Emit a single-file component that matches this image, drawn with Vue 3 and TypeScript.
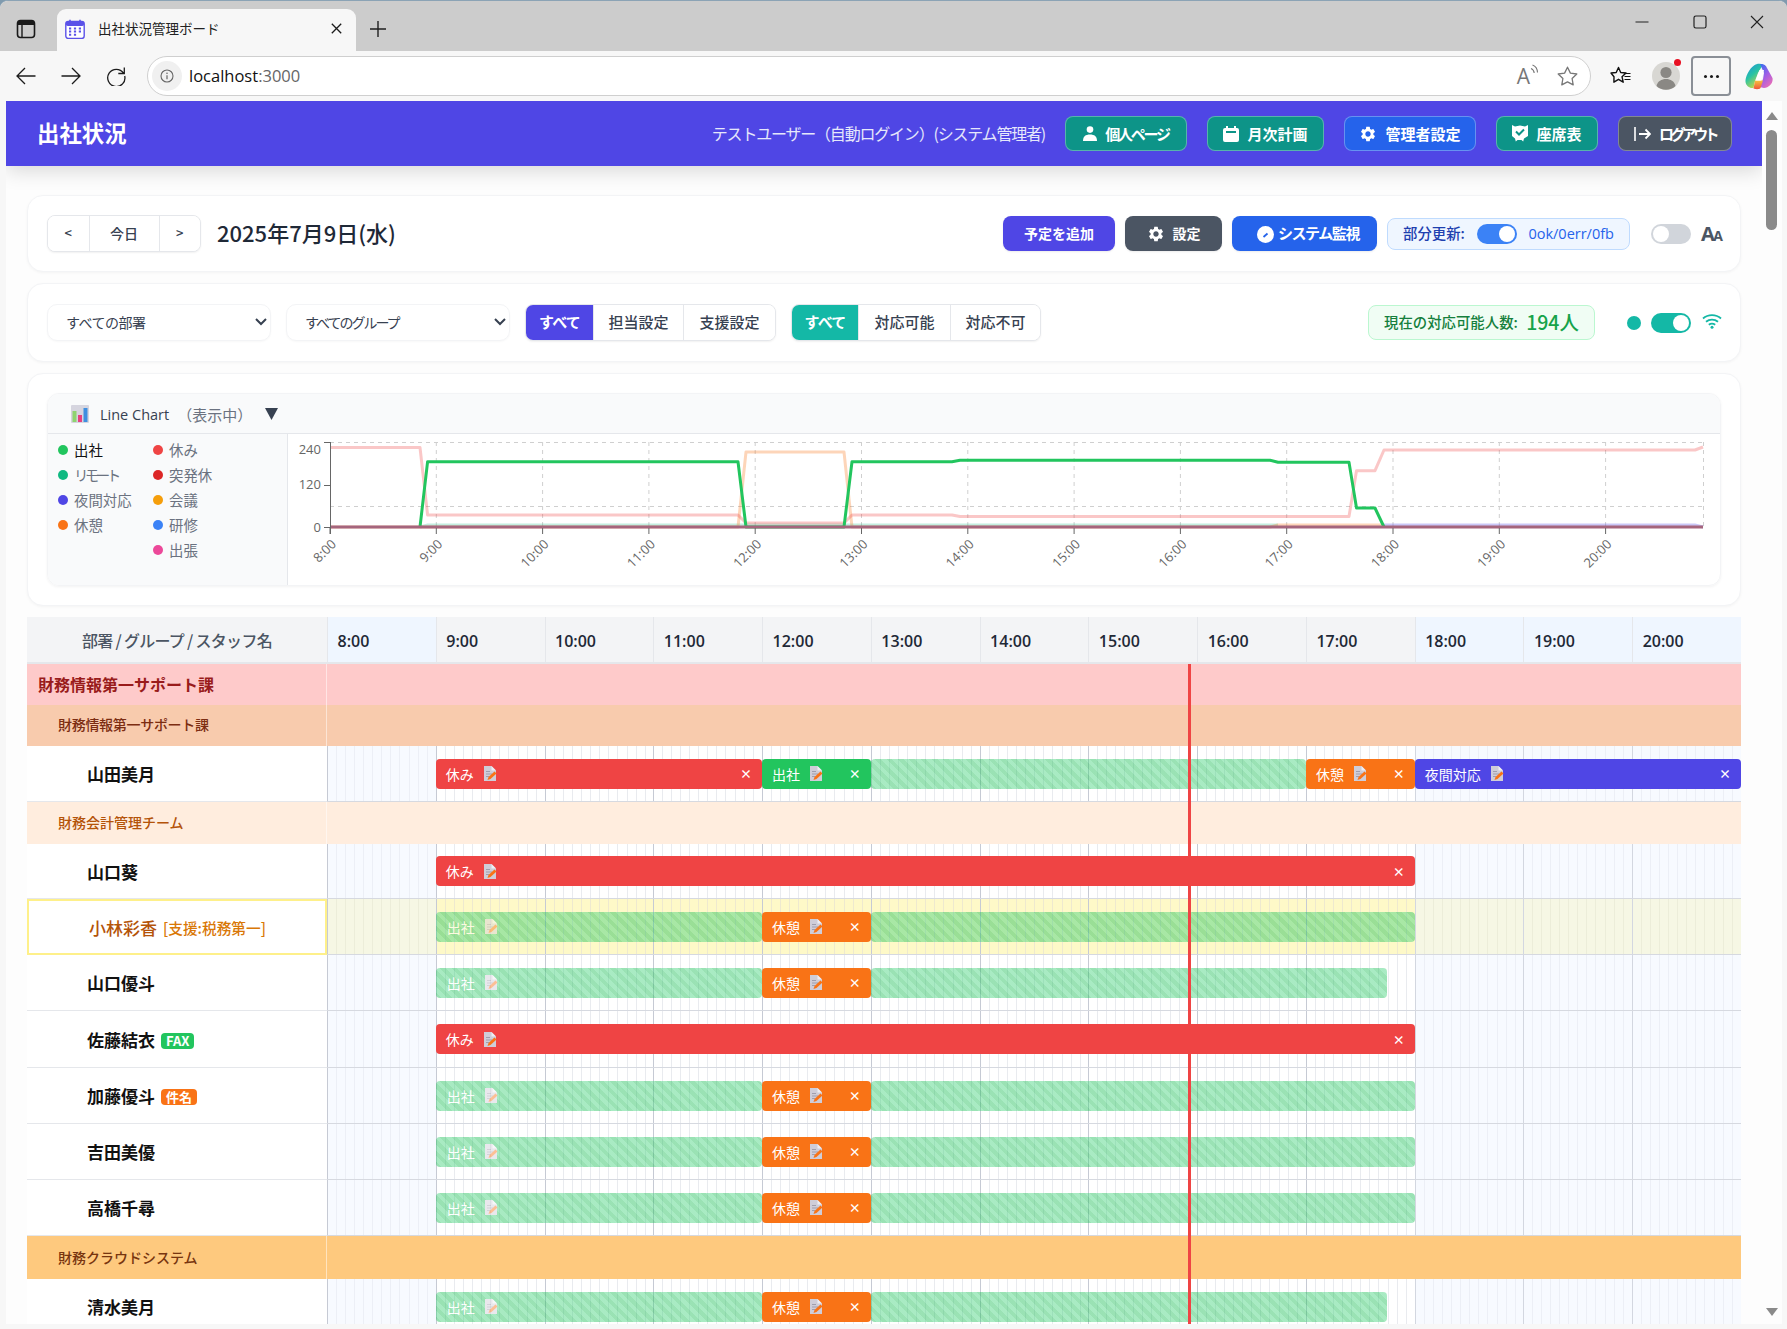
<script setup lang="ts">
type Bar = { label: string; from: number; to: number; tone: string };
type Row = {
  kind: "dept" | "group" | "staff";
  name: string;
  h: number;
  tone?: string;
  support?: string;
  badge?: string;
  badgeTone?: string;
  highlight?: boolean;
  bars?: Bar[];
};

const hours = Array.from({ length: 13 }, (_, i) => i + 8);
const isOff = (h: number) => h < 9 || h >= 18;

const gear =
  "M19.14 12.94c.04-.3.06-.61.06-.94 0-.32-.02-.64-.07-.94l2.03-1.58a.49.49 0 0 0 .12-.61l-1.92-3.32a.488.488 0 0 0-.59-.22l-2.39.96c-.5-.38-1.03-.7-1.62-.94l-.36-2.54a.484.484 0 0 0-.48-.41h-3.84c-.24 0-.43.17-.47.41l-.36 2.54c-.59.24-1.13.57-1.62.94l-2.39-.96c-.22-.08-.47 0-.59.22L2.74 8.87c-.12.21-.08.47.12.61l2.03 1.58c-.05.3-.09.63-.09.94s.02.64.07.94l-2.03 1.58a.49.49 0 0 0-.12.61l1.92 3.32c.12.22.37.29.59.22l2.39-.96c.5.38 1.03.7 1.62.94l.36 2.54c.05.24.24.41.48.41h3.84c.24 0 .44-.17.47-.41l.36-2.54c.59-.24 1.13-.56 1.62-.94l2.39.96c.22.08.47 0 .59-.22l1.92-3.32c.12-.22.07-.47-.12-.61l-2.01-1.58zM12 15.6c-1.98 0-3.6-1.62-3.6-3.6s1.62-3.6 3.6-3.6 3.6 1.62 3.6 3.6-1.62 3.6-3.6 3.6z";

const legendA = [
  { t: "出社", c: "#22c55e", cls: "on" },
  { t: "リモート", c: "#10b981", cls: "kana" },
  { t: "夜間対応", c: "#4f46e5", cls: "" },
  { t: "休憩", c: "#f97316", cls: "" },
];
const legendB = [
  { t: "休み", c: "#ef4444" },
  { t: "突発休", c: "#dc2626" },
  { t: "会議", c: "#f59e0b" },
  { t: "研修", c: "#3b82f6" },
  { t: "出張", c: "#ec4899" },
];

const chartHours = hours.map((h) => ({ h, x: 330 + (h - 8) * 106.3 }));
const pink =
  "330,447.5 420,447.5 427.6,515 738,515 746,523 844,523 852,515 952,515 960,516.5 1349,516.5 1356.5,470.7 1375,470.7 1384,450 1695,450 1703,447";
const green =
  "420,527 427.6,461.7 738,461.7 746,527 844,527 852,461.7 952,461.7 960,460.3 1270,460.3 1278,462.3 1349,462.3 1356.5,508 1375,508 1384,527";
const orange = "330,527 738,527 746,452 844,452 852,527 1270,527 1278,525 1384,525";
const teal = "420,527 427.6,525 1278,525";
const violet = "1384,525 1695,525 1703,527";

const full = (end: number): Bar[] => [
  { label: "出社", from: 9, to: 12, tone: "stripe" },
  { label: "休憩", from: 12, to: 13, tone: "orange" },
  { label: "", from: 13, to: end, tone: "stripe" },
];

const rows: Row[] = [
  { kind: "dept", name: "財務情報第一サポート課", h: 41 },
  { kind: "group", name: "財務情報第一サポート課", h: 41, tone: "g1" },
  {
    kind: "staff",
    name: "山田美月",
    h: 56,
    bars: [
      { label: "休み", from: 9, to: 12, tone: "red" },
      { label: "出社", from: 12, to: 13, tone: "green" },
      { label: "", from: 13, to: 17, tone: "stripe" },
      { label: "休憩", from: 17, to: 18, tone: "orange" },
      { label: "夜間対応", from: 18, to: 21, tone: "indigo" },
    ],
  },
  { kind: "group", name: "財務会計管理チーム", h: 42, tone: "g2" },
  { kind: "staff", name: "山口葵", h: 55, bars: [{ label: "休み", from: 9, to: 18, tone: "red" }] },
  { kind: "staff", name: "小林彩香", h: 56, support: "[支援:税務第一]", highlight: true, bars: full(18) },
  { kind: "staff", name: "山口優斗", h: 56, bars: full(17.75) },
  {
    kind: "staff",
    name: "佐藤結衣",
    h: 57,
    badge: "FAX",
    badgeTone: "fax",
    bars: [{ label: "休み", from: 9, to: 18, tone: "red" }],
  },
  { kind: "staff", name: "加藤優斗", h: 56, badge: "件名", badgeTone: "subject", bars: full(18) },
  { kind: "staff", name: "吉田美優", h: 56, bars: full(18) },
  { kind: "staff", name: "高橋千尋", h: 56, bars: full(18) },
  { kind: "group", name: "財務クラウドシステム", h: 43, tone: "g3" },
  { kind: "staff", name: "清水美月", h: 56, bars: full(17.75) },
];

const barStyle = (b: Bar) => ({
  left: `${((b.from - 8) / 13) * 100}%`,
  width: `${((b.to - b.from) / 13) * 100}%`,
});
</script>

<template>
  <div class="window">
    <div class="tabstrip">
      <svg class="panel-icon" width="20" height="20" viewBox="0 0 20 20">
        <rect x="1.5" y="1.5" width="17" height="17" rx="3" fill="none" stroke="#1a1a1a" stroke-width="1.6" />
        <path d="M1.5 4.5a3 3 0 0 1 3-3h11a3 3 0 0 1 3 3v1.5h-17z" fill="#1a1a1a" />
        <path d="M6 6v12" stroke="#1a1a1a" stroke-width="1.4" />
      </svg>
      <div class="tab">
        <svg width="20" height="20" viewBox="0 0 20 20">
          <rect x="0.8" y="2.5" width="18.4" height="17" rx="2.5" fill="#fff" stroke="#5b52e8" stroke-width="1.4" />
          <rect x="0.8" y="2.5" width="18.4" height="4.5" rx="2" fill="#5b52e8" />
          <path d="M5 0.8v3.4M15 0.8v3.4" stroke="#5b52e8" stroke-width="1.6" fill="none" />
          <path d="M4 9.5h2.2M8.9 9.5h2.2M13.8 9.5h2.2M4 12.6h2.2M8.9 12.6h2.2M13.8 12.6h2.2M4 15.7h2.2M8.9 15.7h2.2" stroke="#5b52e8" stroke-width="2" />
        </svg>
        <span class="tab-title">出社状況管理ボード</span>
        <svg class="tab-close" width="11" height="11" viewBox="0 0 11 11">
          <path d="M.8.8l9.4 9.4M10.2.8L.8 10.2" stroke="#1a1a1a" stroke-width="1.3" />
        </svg>
      </div>
      <svg class="tab-new" width="18" height="18" viewBox="0 0 18 18">
        <path d="M9 1v16M1 9h16" stroke="#1f1f1f" stroke-width="1.4" />
      </svg>
      <div class="win-controls">
        <svg width="14" height="14" viewBox="0 0 14 14"><path d="M0.5 7h13" stroke="#222" stroke-width="1.2" /></svg>
        <svg width="14" height="14" viewBox="0 0 14 14"><rect x="1" y="1" width="12" height="12" rx="1.8" fill="none" stroke="#222" stroke-width="1.2" /></svg>
        <svg width="14" height="14" viewBox="0 0 14 14"><path d="M1 1l12 12M13 1L1 13" stroke="#222" stroke-width="1.1" /></svg>
      </div>
    </div>

    <div class="toolbar">
      <div class="nav-icons">
        <svg width="20" height="20" viewBox="0 0 20 20"><path d="M19.5 10H1M9 2l-8 8 8 8" fill="none" stroke="#1c1c1c" stroke-width="1.3" /></svg>
        <svg width="20" height="20" viewBox="0 0 20 20"><path d="M.5 10H19M11 2l8 8-8 8" fill="none" stroke="#1c1c1c" stroke-width="1.3" /></svg>
        <svg width="20" height="20" viewBox="0 0 20 20"><path d="M17.5 7.2A8.6 8.6 0 1 0 18.7 10M18.3 1.5v6h-6" fill="none" stroke="#1c1c1c" stroke-width="1.3" /></svg>
      </div>
      <div class="address">
        <span class="info">
          <svg width="14" height="14" viewBox="0 0 14 14">
            <circle cx="7" cy="7" r="6" fill="none" stroke="#666" stroke-width="1.1" />
            <path d="M7 6.2v4" stroke="#666" stroke-width="1.2" />
            <circle cx="7" cy="4.2" r=".8" fill="#666" />
          </svg>
        </span>
        <span class="url">localhost<span class="port">:3000</span></span>
        <span class="spacer"></span>
        <span class="read-aloud">A<svg width="9" height="14" viewBox="0 0 9 14"><path d="M1 4.5c2 .8 3 2.2 3.2 4.5M2.5 1c3 1 4.8 3.5 5 7.5" fill="none" stroke="#777" stroke-width="1.1" /></svg></span>
        <svg class="star" width="21" height="20" viewBox="0 0 21 20">
          <path d="M10.5 1.2l2.9 5.9 6.4.9-4.7 4.5 1.1 6.4-5.7-3-5.7 3 1.1-6.4L1.2 8l6.4-.9z" fill="none" stroke="#777" stroke-width="1.3" stroke-linejoin="round" />
        </svg>
      </div>
      <svg class="favs" width="21" height="20" viewBox="0 0 21 20">
        <path d="M8.5 1.5l2.2 5 5.3.5-4 3.7 1.2 5.5-4.7-2.9-4.6 2.9L4 10.7 1 7l5.2-.5z" fill="none" stroke="#111" stroke-width="1.4" stroke-linejoin="round" />
        <path d="M14.5 7.5h6M14.5 10.5h6M14.5 13.5h6" stroke="#111" stroke-width="1.1" />
      </svg>
      <div class="avatar">
        <svg width="28" height="28" viewBox="0 0 28 28">
          <circle cx="14" cy="14" r="14" fill="#d8d7d3" />
          <circle cx="14" cy="10.5" r="5.6" fill="#8a8884" />
          <path d="M4.5 24c1.2-5 5-7 9.5-7s8.3 2 9.5 7a14 14 0 0 1-19 0z" fill="#8a8884" />
        </svg>
        <i class="avatar-dot"></i>
      </div>
      <div class="more"><i></i><i></i><i></i></div>
      <svg class="copilot" width="28" height="27" viewBox="0 0 28 27">
        <defs>
          <linearGradient id="cpA" x1="0" y1="0" x2="0.6" y2="1">
            <stop offset="0" stop-color="#1f8de0" />
            <stop offset=".5" stop-color="#27c3a5" />
            <stop offset="1" stop-color="#d6d93a" />
          </linearGradient>
          <linearGradient id="cpB" x1="0.2" y1="0" x2="0.8" y2="1">
            <stop offset="0" stop-color="#3f6bf0" />
            <stop offset=".5" stop-color="#a45ee5" />
            <stop offset="1" stop-color="#f06fb0" />
          </linearGradient>
          <linearGradient id="cpC" x1="0" y1="0" x2="0" y2="1">
            <stop offset="0" stop-color="#f7c23c" />
            <stop offset="1" stop-color="#f0543a" />
          </linearGradient>
        </defs>
        <path d="M9 2.5C11 .8 15 .2 18 1.5L13 10l-3 8-1.5 7C5 25.5 1 23 .5 19 .2 14 4 6 9 2.5z" fill="url(#cpA)" />
        <path d="M15 1c3-.5 6 .8 7 4l5.5 10c1 5-3.5 9.5-8.5 10l-4.5-1 3.5-8 1-6z" fill="url(#cpB)" />
        <path d="M10 17.5h8l-2.5 7.5c-1 1.5-4.5 1.5-7 .5z" fill="url(#cpC)" />
        <path d="M14.5 7h4.5l-1.5 6.5-1.5 4h-5.5l2-5z" fill="#fff" />
      </svg>
    </div>

    <div class="viewport">
      <div class="page">
        <header class="app-header">
          <h1 class="app-title">出社状況</h1>
          <span class="user">テストユーザー（自動ログイン）(システム管理者)</span>
          <div class="head-buttons">
            <button class="hbtn teal w122 kana">
              <svg width="14" height="15" viewBox="0 0 14 15"><circle cx="7" cy="3.6" r="3.3" fill="#fff" /><path d="M0 15c0-4.5 2.5-6.5 7-6.5s7 2 7 6.5z" fill="#fff" /></svg>
              <span>個人ページ</span>
            </button>
            <button class="hbtn teal w117">
              <svg width="16" height="16" viewBox="0 0 16 16"><path d="M3 0h2v2h6V0h2v2h1a2 2 0 0 1 2 2v10a2 2 0 0 1-2 2H2a2 2 0 0 1-2-2V4a2 2 0 0 1 2-2h1z" fill="#fff" /><rect x="3" y="5" width="10" height="2" fill="#0d9488" /></svg>
              <span>月次計画</span>
            </button>
            <button class="hbtn blue w132">
              <svg width="18" height="18" viewBox="0 0 24 24"><path :d="gear" fill="#fff" /></svg>
              <span>管理者設定</span>
            </button>
            <button class="hbtn teal w102">
              <svg width="16" height="17" viewBox="0 0 16 17"><path d="M0 0l3 1.5L8 .5l5 1 3-1.5v11l-4 2.5-.8 3-1.7-1.5H5.5L3.8 16.5 3 13.5l-3-2.5z" fill="#fff" /><path d="M4 6.5l3 3 5-5" fill="none" stroke="#0d9488" stroke-width="2" /></svg>
              <span>座席表</span>
            </button>
            <button class="hbtn gray w114 kana-tight">
              <svg width="17" height="14" viewBox="0 0 17 14"><path d="M1 0v14" stroke="#fff" stroke-width="1.6" /><path d="M5 7h11M11.5 2.5L16 7l-4.5 4.5" fill="none" stroke="#fff" stroke-width="1.8" /></svg>
              <span>ログアウト</span>
            </button>
          </div>
        </header>

        <div class="content">
          <section class="card card-date">
            <div class="seg nav-seg">
              <button class="seg-btn narrow">&lt;</button>
              <button class="seg-btn today">今日</button>
              <button class="seg-btn narrow">&gt;</button>
            </div>
            <h2 class="date">2025年7月9日(水)</h2>
            <span class="spacer"></span>
            <button class="abtn indigo w112"><span>予定を追加</span></button>
            <button class="abtn slate w97">
              <svg width="18" height="18" viewBox="0 0 24 24"><path :d="gear" fill="#fff" /></svg>
              <span>設定</span>
            </button>
            <button class="abtn royal w145">
              <svg class="gauge" width="17" height="17" viewBox="0 0 17 17"><circle cx="8.5" cy="8.5" r="8.5" fill="#fff" /><path d="M6.5 11l4-3.5" stroke="#2563eb" stroke-width="1.8" /></svg>
              <span class="tight">システム監視</span>
            </button>
            <div class="partial">
              <span>部分更新:</span>
              <span class="toggle on-blue"><i></i></span>
              <span class="partial-count">0ok/0err/0fb</span>
            </div>
            <span class="toggle off"><i></i></span>
            <span class="aa">A<small>A</small></span>
          </section>

          <section class="card card-filter">
            <div class="select first"><span>すべての部署</span>
              <svg width="12" height="8" viewBox="0 0 12 8"><path d="M1 1l5 5 5-5" fill="none" stroke="#374151" stroke-width="2" /></svg>
            </div>
            <div class="select second-select"><span>すべてのグループ</span>
              <svg width="12" height="8" viewBox="0 0 12 8"><path d="M1 1l5 5 5-5" fill="none" stroke="#374151" stroke-width="2" /></svg>
            </div>
            <div class="seg filter-seg">
              <button class="seg-btn active-indigo w67">すべて</button>
              <button class="seg-btn w90">担当設定</button>
              <button class="seg-btn w92">支援設定</button>
            </div>
            <div class="seg filter-seg second">
              <button class="seg-btn active-teal w66">すべて</button>
              <button class="seg-btn w92">対応可能</button>
              <button class="seg-btn w90">対応不可</button>
            </div>
            <span class="spacer"></span>
            <div class="count">現在の対応可能人数:<strong>194人</strong></div>
            <i class="status-dot"></i>
            <span class="toggle on-teal"><i></i></span>
            <svg class="wifi" width="20" height="16" viewBox="0 0 20 16">
              <path d="M1 5.5c5-4.6 13-4.6 18 0M4 8.8c3.5-3 8.5-3 12 0M6.8 11.8c2-1.5 4.4-1.5 6.4 0" fill="none" stroke="#14b8a6" stroke-width="1.8" />
              <circle cx="10" cy="14.3" r="1.5" fill="#14b8a6" />
            </svg>
          </section>

          <section class="card card-chart">
            <div class="chart-box">
              <div class="chart-head">
                <svg width="18" height="18" viewBox="0 0 18 18">
                  <rect width="18" height="18" rx="1" fill="#d6d5df" />
                  <rect x="1.5" y="6" width="4" height="11" fill="#8fd46f" />
                  <rect x="7" y="10" width="4" height="7" fill="#e8417f" />
                  <rect x="12.5" y="3" width="4" height="14" fill="#3f8fe0" />
                </svg>
                <span class="chart-name">Line Chart</span>
                <span class="chart-state">（表示中）</span>
                <svg class="chart-caret" width="13" height="12" viewBox="0 0 13 12"><path d="M0 0h13L6.5 12z" fill="#374151" /></svg>
              </div>
              <div class="chart-body">
                <div class="legend">
                  <ul class="legend-col">
                    <li v-for="l in legendA" :key="l.t" :class="l.cls"><i :style="{ background: l.c }"></i>{{ l.t }}</li>
                  </ul>
                  <ul class="legend-col">
                    <li v-for="l in legendB" :key="l.t"><i :style="{ background: l.c }"></i>{{ l.t }}</li>
                  </ul>
                </div>
                <svg class="chart-svg" width="1433" height="151" viewBox="288 434 1433 151">
                  <g stroke="#cfcfcf" stroke-width="1" stroke-dasharray="4 4" fill="none">
                    <path d="M330 442.5H1703M330 506.5H1703M1703.5 442V527" />
                    <path v-for="c in chartHours.slice(1)" :key="c.h" :d="`M${c.x} 442V527`" />
                  </g>
                  <polyline :points="teal" fill="none" stroke="#10b981" stroke-opacity=".25" stroke-width="3" />
                  <polyline :points="violet" fill="none" stroke="#4f46e5" stroke-opacity=".3" stroke-width="3" />
                  <polyline :points="orange" fill="none" stroke="#f97316" stroke-opacity=".3" stroke-width="3" stroke-linejoin="round" />
                  <polyline :points="pink" fill="none" stroke="#ef4444" stroke-opacity=".3" stroke-width="3" stroke-linejoin="round" />
                  <polyline :points="green" fill="none" stroke="#22c55e" stroke-width="3" stroke-linejoin="round" />
                  <path d="M330 527H1703" stroke="#a5657d" stroke-width="3" />
                  <g stroke="#666" stroke-width="1">
                    <path d="M330.5 442V534M324 442.5h6M324 485.5h6M324 527.5h6" />
                    <path v-for="c in chartHours" :key="c.h" :d="`M${c.x} 528V534`" />
                  </g>
                  <g class="chart-text" text-anchor="end">
                    <text x="321" y="454">240</text>
                    <text x="321" y="489">120</text>
                    <text x="321" y="532">0</text>
                    <text v-for="c in chartHours" :key="c.h" :x="c.x + 7" y="545" :transform="`rotate(-45 ${c.x + 7} 545)`">{{ c.h }}:00</text>
                  </g>
                </svg>
              </div>
            </div>
          </section>

          <section class="table">
            <div class="thead">
              <div class="th-name">部署 / グループ / スタッフ名</div>
              <div v-for="h in hours" :key="h" class="th-hour" :class="{ off: isOff(h) }">{{ h }}:00</div>
            </div>
            <div
              v-for="(r, i) in rows"
              :key="i"
              class="row"
              :class="[r.kind, r.tone, { highlight: r.highlight }]"
              :style="{ height: r.h + 'px' }"
            >
              <div class="cell-name">
                <span class="name">{{ r.name }}</span>
                <span v-if="r.support" class="support">{{ r.support }}</span>
                <span v-if="r.badge" class="badge" :class="r.badgeTone">{{ r.badge }}</span>
              </div>
              <div class="lane">
                <template v-if="r.kind === 'staff'">
                  <div v-for="h in hours" :key="h" class="hour" :class="{ off: isOff(h) }"></div>
                  <div v-for="(b, j) in r.bars" :key="j" class="bar" :class="b.tone" :style="barStyle(b)">
                    <template v-if="b.label">
                      <span class="bar-label">{{ b.label }}</span>
                      <svg class="memo" width="13" height="15" viewBox="0 0 13 15">
                        <path d="M0 0h7.5L12 4.5V15H0z" fill="#cfcdd8" />
                        <path d="M7.5 0L12 4.5H7.5z" fill="#eeeef3" />
                        <path d="M2 5.5h4M2 8h6M2 10.5h3" stroke="#9b99a8" stroke-width=".9" />
                        <path d="M3.5 14l1-3 6-5.5 2 2-6 5.5z" fill="#f97316" />
                      </svg>
                    </template>
                    <span v-if="b.tone !== 'stripe'" class="bar-close">×</span>
                  </div>
                </template>
              </div>
            </div>
            <div class="now-line"></div>
          </section>
        </div>
      </div>

      <aside class="scrollbar">
        <i class="arrow up"></i>
        <i class="thumb"></i>
        <span class="spacer"></span>
        <i class="arrow down"></i>
      </aside>
    </div>
  </div>
</template>

<style>
html,
body {
  margin: 0;
  width: 1787px;
  height: 1329px;
  overflow: hidden;
  background: #7f9aae;
}
</style>

<style scoped>
* {
  box-sizing: border-box;
}
button {
  font: inherit;
  border: 0;
  padding: 0;
  cursor: pointer;
}
h1,
h2,
ul {
  margin: 0;
  padding: 0;
}
ul {
  list-style: none;
}
.spacer {
  flex: 1;
}
.window {
  width: 1787px;
  height: 1329px;
  border-radius: 8px 8px 0 0;
  overflow: hidden;
  background: #f7f7f7;
  display: flex;
  flex-direction: column;
  border-top: 1px solid #8ba3b5;
  font-family: "Open Sans", "Noto Sans CJK JP", sans-serif;
  color: #1f2937;
}
.tabstrip {
  height: 50px;
  flex: none;
  background: #cccccc;
  display: flex;
  align-items: flex-end;
}
.panel-icon {
  margin: 0 0 12px 16px;
}
.tab {
  width: 299px;
  height: 42px;
  margin-left: 21px;
  padding: 0 14px 3px 8px;
  background: #f7f7f7;
  border-radius: 9px 9px 0 0;
  display: flex;
  align-items: center;
  gap: 13px;
}
.tab-title {
  font-size: 13.5px;
  color: #222;
  font-family: "Noto Sans CJK JP", sans-serif;
  flex: 1;
  padding-bottom: 1px;
}
.tab-new {
  margin: 0 0 13px 13px;
}
.win-controls {
  margin-left: auto;
  height: 50px;
  width: 129px;
  margin-right: 23px;
  padding-bottom: 9px;
  display: flex;
  justify-content: space-between;
  align-items: center;
}
.toolbar {
  height: 50px;
  flex: none;
  display: flex;
  align-items: center;
}
.nav-icons {
  display: flex;
  gap: 25px;
  margin-left: 16px;
  width: 131px;
}
.address {
  width: 1444px;
  height: 40px;
  background: #fff;
  border: 1.5px solid #cfcfcf;
  border-radius: 20px;
  display: flex;
  align-items: center;
  padding: 0 12px 0 4px;
}
.info {
  width: 30px;
  height: 30px;
  border-radius: 50%;
  background: #f0f0f0;
  display: flex;
  align-items: center;
  justify-content: center;
}
.url {
  margin-left: 7px;
  font-size: 16.5px;
  color: #111;
  padding-bottom: 2px;
}
.port {
  color: #666;
}
.read-aloud {
  font-size: 21px;
  color: #777;
  display: flex;
  font-family: "Open Sans", sans-serif;
  line-height: 24px;
  margin-right: 18px;
}
.favs {
  margin-left: 19px;
}
.avatar {
  position: relative;
  width: 28px;
  height: 28px;
  margin-left: 21px;
}
.avatar-dot {
  position: absolute;
  left: 21.5px;
  top: -3px;
  width: 7px;
  height: 7px;
  border-radius: 50%;
  background: #e81123;
}
.more {
  width: 40px;
  height: 40px;
  margin-left: 11px;
  border: 2.5px solid #8a8f96;
  border-radius: 4px;
  display: flex;
  gap: 3px;
  align-items: center;
  justify-content: center;
}
.more i {
  width: 3px;
  height: 3px;
  border-radius: 50%;
  background: #1a1a1a;
}
.copilot {
  margin-left: 14px;
}
.viewport {
  flex: 1;
  min-height: 0;
  display: flex;
  padding: 0 5px 5px 6px;
}
.page {
  flex: 1;
  min-width: 0;
  background: #fdfdfd;
  overflow: hidden;
}
.app-header {
  height: 65px;
  background: #4f46e5;
  display: flex;
  align-items: center;
  padding: 0 30px 0 31px;
  color: #fff;
  box-shadow: 0 4px 20px rgba(0, 0, 0, 0.16);
  position: relative;
}
.app-title {
  font-size: 22.4px;
  font-weight: 700;
  flex: 1;
  padding-bottom: 3px;
  font-family: "Noto Sans CJK JP", sans-serif;
}
.user {
  font-size: 16px;
  letter-spacing: -1.2px;
  margin-right: 20px;
  padding-bottom: 2px;
  color: #e5e7fb;
  font-family: "Noto Sans CJK JP", sans-serif;
}
.head-buttons {
  display: flex;
  gap: 20px;
}
.hbtn {
  height: 35px;
  border-radius: 8px;
  border: 1px solid rgba(255, 255, 255, 0.3);
  color: #fff;
  font-size: 15px;
  font-weight: 700;
  display: flex;
  align-items: center;
  justify-content: center;
  gap: 8px;
  font-family: "Noto Sans CJK JP", sans-serif;
}
.hbtn span {
  padding-bottom: 1px;
}
.kana span {
  letter-spacing: -2.2px;
}
.kana-tight span {
  letter-spacing: -3.6px;
}
.hbtn.teal {
  background: #0d9488;
}
.hbtn.blue {
  background: #2563eb;
}
.hbtn.gray {
  background: #4b5563;
}
.w122 { width: 122px; }
.w117 { width: 117px; }
.w132 { width: 132px; }
.w102 { width: 102px; }
.w114 { width: 114px; }
.w112 { width: 112px; }
.w97 { width: 97px; }
.w145 { width: 145px; }
.w66 { width: 66px; }
.w67 { width: 67px; }
.w90 { width: 90px; }
.w92 { width: 92px; }

.content {
  padding: 29px 21px 0;
  display: flex;
  flex-direction: column;
  gap: 11px;
}
.card {
  background: #fff;
  border: 1px solid #f3f4f6;
  border-radius: 16px;
  box-shadow: 0 1px 3px rgba(0, 0, 0, 0.04);
  display: flex;
  align-items: center;
  padding: 0 20px;
  font-family: "Noto Sans CJK JP", sans-serif;
}
.card-date {
  height: 77px;
  gap: 10px;
}
.seg {
  display: flex;
  border: 1px solid #e5e7eb;
  border-radius: 8px;
  overflow: hidden;
  background: #fff;
  box-shadow: 0 1px 2px rgba(0, 0, 0, 0.06);
}
.nav-seg {
  height: 37px;
  margin-left: -1px;
}
.seg-btn {
  background: #fff;
  color: #374151;
  font-size: 14px;
  font-weight: 500;
  border-left: 1px solid #e5e7eb;
  padding-bottom: 2px;
  font-family: "Noto Sans CJK JP", sans-serif;
}
.seg-btn:first-child {
  border-left: 0;
}
.narrow {
  width: 40.5px;
  font-size: 13px;
}
.today {
  width: 71px;
  border-right: 1px solid #e5e7eb;
}
.narrow + .today + .narrow {
  border-left: 0;
}
.date {
  font-size: 22px;
  font-weight: 500;
  margin-left: 6px;
  padding-bottom: 4px;
  color: #1f2937;
}
.abtn {
  height: 35px;
  border-radius: 8px;
  color: #fff;
  font-size: 14px;
  font-weight: 700;
  display: flex;
  align-items: center;
  justify-content: center;
  gap: 8px;
  font-family: "Noto Sans CJK JP", sans-serif;
  box-shadow: 0 1px 2px rgba(0, 0, 0, 0.08);
}
.abtn span {
  padding-bottom: 2px;
}
.abtn.indigo {
  background: #4f46e5;
}
.abtn.slate {
  background: #4b5563;
}
.abtn.royal {
  background: #2563eb;
  gap: 4px;
  padding-left: 7px;
}
.gauge {
  margin-top: 2px;
}
.tight {
  font-size: 15px;
  letter-spacing: -1.4px;
}
.partial {
  width: 243px;
  height: 32px;
  border: 1px solid #bfdbfe;
  background: #eff6ff;
  border-radius: 8px;
  display: flex;
  align-items: center;
  justify-content: space-between;
  padding: 0 15px;
  font-size: 14.4px;
  font-weight: 500;
  color: #1e40af;
}
.partial > span:first-child {
  padding-bottom: 2px;
}
.partial-count {
  color: #2563eb;
  font-weight: 500;
  font-family: "Open Sans", sans-serif;
  font-size: 14.5px;
}
.toggle {
  display: block;
  width: 40px;
  height: 20px;
  border-radius: 10px;
  position: relative;
  flex: none;
}
.toggle i {
  position: absolute;
  top: 2px;
  width: 16px;
  height: 16px;
  border-radius: 50%;
  background: #fff;
}
.toggle.off {
  background: #d1d5db;
  margin-left: 11px;
}
.toggle.off i {
  left: 2px;
}
.toggle.on-blue {
  background: #3b82f6;
}
.toggle.on-blue i,
.toggle.on-teal i {
  right: 2px;
}
.toggle.on-teal {
  background: #14b8a6;
  margin-left: 10px;
}
.aa {
  font-size: 20px;
  font-weight: 700;
  color: #4b5563;
  width: 20px;
  margin-right: -1px;
  letter-spacing: -1.5px;
  font-family: "Open Sans", sans-serif;
}
.aa small {
  font-size: 14px;
}
.card-filter {
  height: 79px;
}
.select {
  width: 224px;
  height: 37px;
  margin-right: 15px;
  border: 1px solid #f3f4f6;
  border-radius: 10px;
  box-shadow: 0 1px 2px rgba(0, 0, 0, 0.03);
  display: flex;
  align-items: center;
  justify-content: space-between;
  padding: 0 3px 2px 18px;
  font-size: 14px;
  color: #374151;
}
.select.first {
  margin-left: -1px;
  letter-spacing: -0.5px;
}
.second-select span {
  letter-spacing: -2px;
}
.filter-seg {
  height: 37px;
}
.filter-seg .seg-btn {
  font-size: 15px;
}
.filter-seg.second {
  margin-left: 15px;
}
.active-indigo,
.active-teal {
  color: #fff;
  font-weight: 700;
  letter-spacing: -0.8px;
}
.active-indigo {
  background: #4f46e5;
}
.active-teal {
  background: #14b8a6;
}
.count {
  width: 227px;
  height: 35px;
  border: 1px solid #bbf7d0;
  background: #f0fdf4;
  border-radius: 8px;
  display: flex;
  align-items: center;
  justify-content: space-between;
  padding: 0 15px 2px;
  font-size: 14.4px;
  font-weight: 500;
  color: #15803d;
}
.count strong {
  font-size: 19.5px;
  font-weight: 500;
  color: #16a34a;
}
.status-dot {
  width: 14px;
  height: 14px;
  border-radius: 50%;
  background: #14b8a6;
  margin-left: 32px;
}
.wifi {
  margin-left: 11px;
  margin-top: -4px;
  margin-right: -2px;
}
.card-chart {
  height: 233px;
  padding: 19px 19px;
  align-items: stretch;
}
.chart-box {
  flex: 1;
  border: 1px solid #f3f4f6;
  border-radius: 12px;
  overflow: hidden;
  box-shadow: 0 1px 3px rgba(0, 0, 0, 0.05);
  display: flex;
  flex-direction: column;
}
.chart-head {
  height: 40px;
  flex: none;
  background: #f9fafb;
  border-bottom: 1px solid #e5e7eb;
  display: flex;
  align-items: center;
  padding: 1px 0 0 23px;
  font-size: 14.5px;
}
.chart-name {
  margin-left: 11px;
  font-weight: 500;
  color: #374151;
  font-family: "Open Sans", sans-serif;
}
.chart-state {
  margin-left: 8px;
  font-size: 15px;
  color: #6b7280;
}
.chart-caret {
  margin-left: 13px;
}
.chart-body {
  flex: 1;
  display: flex;
  min-height: 0;
}
.legend {
  width: 240px;
  flex: none;
  background: #f9fafb;
  border-right: 1px solid #e5e7eb;
  padding: 3px 0 0 10px;
  display: flex;
}
.legend-col {
  width: 95px;
}
.legend-col li {
  height: 25px;
  display: flex;
  align-items: center;
  font-size: 14.4px;
  color: #6b7280;
}
.legend-col li.on {
  color: #111;
}
.legend-col li.kana {
  letter-spacing: -3.5px;
}
.legend-col i {
  width: 10px;
  height: 10px;
  border-radius: 50%;
  margin-right: 6px;
}
.chart-svg {
  display: block;
  flex: none;
}
.chart-text text {
  font-size: 13px;
  fill: #666;
  font-family: "Open Sans", sans-serif;
}

.table {
  position: relative;
  background: #fff;
  font-family: "Noto Sans CJK JP", sans-serif;
}
.thead {
  height: 47px;
  display: flex;
  border-bottom: 2px solid #e5e7eb;
}
.th-name {
  width: 300px;
  flex: none;
  background: #f3f4f6;
  display: flex;
  align-items: center;
  justify-content: center;
  font-size: 16px;
  letter-spacing: -0.7px;
  font-weight: 500;
  color: #4b5563;
}
.th-hour {
  flex: 1;
  background: #f3f4f6;
  border-left: 1px solid #e5e7eb;
  display: flex;
  align-items: center;
  padding: 2px 0 0 9.5px;
  font-size: 16px;
  font-weight: 600;
  color: #1f2937;
  font-family: "Open Sans", "Noto Sans CJK JP", sans-serif;
}
.th-hour.off {
  background: #eff6ff;
}
.row {
  display: flex;
}
.cell-name {
  width: 300px;
  flex: none;
  display: flex;
  align-items: center;
}
.lane {
  flex: 1;
  display: flex;
  position: relative;
}
.dept {
  background: #fecaca;
}
.dept .cell-name {
  padding: 0 0 2px 11px;
  font-size: 16px;
  font-weight: 700;
  color: #991b1b;
  border-right: 1px solid rgba(255, 255, 255, 0.5);
}
.group .cell-name {
  padding: 0 0 2px 31px;
  font-size: 14px;
  font-weight: 500;
  border-right: 1px solid rgba(255, 255, 255, 0.5);
}
.g1 {
  background: #f8cbad;
  color: #7c2d12;
}
.g1 .cell-name {
  letter-spacing: -0.3px;
  padding-bottom: 3px;
}
.g2 {
  background: #ffedde;
  color: #b45309;
}
.g3 {
  background: #fec97e;
  color: #78350f;
}
.staff .cell-name {
  padding-left: 60px;
  font-size: 17px;
  font-weight: 700;
  color: #111;
  border-bottom: 1px solid #e5e7eb;
  background: #fff;
}
.staff .lane {
  border-bottom: 1px solid #d6d9e0;
}
.highlight .cell-name {
  border: 2px solid #fef08a;
  color: #b45309;
  font-weight: 500;
  padding-left: 60px;
}
.support {
  margin-left: 6px;
  font-size: 14.7px;
  font-weight: 500;
  color: #d97706;
}
.badge {
  margin-left: 6px;
  margin-top: 3px;
  height: 16px;
  padding: 0 5px;
  border-radius: 4px;
  color: #fff;
  font-size: 13px;
  font-weight: 700;
  line-height: 16px;
}
.badge.fax {
  background: #22c55e;
}
.badge.subject {
  background: #f97316;
}
.hour {
  flex: 1;
  border-left: 1px solid #c6cad4;
  background: repeating-linear-gradient(90deg, transparent 0 8.06px, #e9ebef 8.06px 9.06px);
}
.hour.off {
  background: repeating-linear-gradient(90deg, transparent 0 8.06px, #eceff6 8.06px 9.06px), #f7faff;
  border-left-color: #d3d7e0;
}
.hour:first-child {
  border-left-color: #c6cad4;
}
.highlight .hour {
  background: repeating-linear-gradient(90deg, transparent 0 8.06px, #eee9cf 8.06px 9.06px), #fef9c8;
}
.highlight .hour.off {
  background: repeating-linear-gradient(90deg, transparent 0 8.06px, #ecedd9 8.06px 9.06px), #f6f7e4;
}
.bar {
  position: absolute;
  top: 50%;
  height: 30px;
  margin-top: -15px;
  border-radius: 4px;
  display: flex;
  align-items: center;
  padding: 0 10px;
  color: #fff;
  font-size: 14px;
  z-index: 3;
}
.bar.red {
  background: #ef4444;
}
.bar.green {
  background: #22c55e;
}
.bar.orange {
  background: #f97316;
}
.bar.indigo {
  background: #4f46e5;
}
.bar.stripe {
  background: repeating-linear-gradient(45deg, #1fbf59 0 4px, #3fd27a 4px 8px);
  opacity: 0.45;
  z-index: 1;
  padding-left: 11px;
}
.memo {
  margin-left: 10px;
}
.bar-close {
  margin-left: auto;
  margin-right: 0;
  font-size: 12px;
  font-weight: 700;
}
.now-line {
  position: absolute;
  left: 1161px;
  top: 47px;
  bottom: 0;
  width: 3px;
  background: #ef4444;
  z-index: 2;
}
.scrollbar {
  width: 20px;
  flex: none;
  background: #fdfdfd;
  display: flex;
  flex-direction: column;
  align-items: flex-start;
  padding: 11px 0 8px 4px;
}
.arrow {
  width: 0;
  height: 0;
  border-left: 6px solid transparent;
  border-right: 6px solid transparent;
}
.arrow.up {
  border-bottom: 8px solid #8a8a8a;
}
.arrow.down {
  border-top: 8px solid #8a8a8a;
}
.thumb {
  width: 11px;
  height: 100px;
  margin-top: 10px;
  border-radius: 6px;
  background: #8a8a8a;
}
</style>
